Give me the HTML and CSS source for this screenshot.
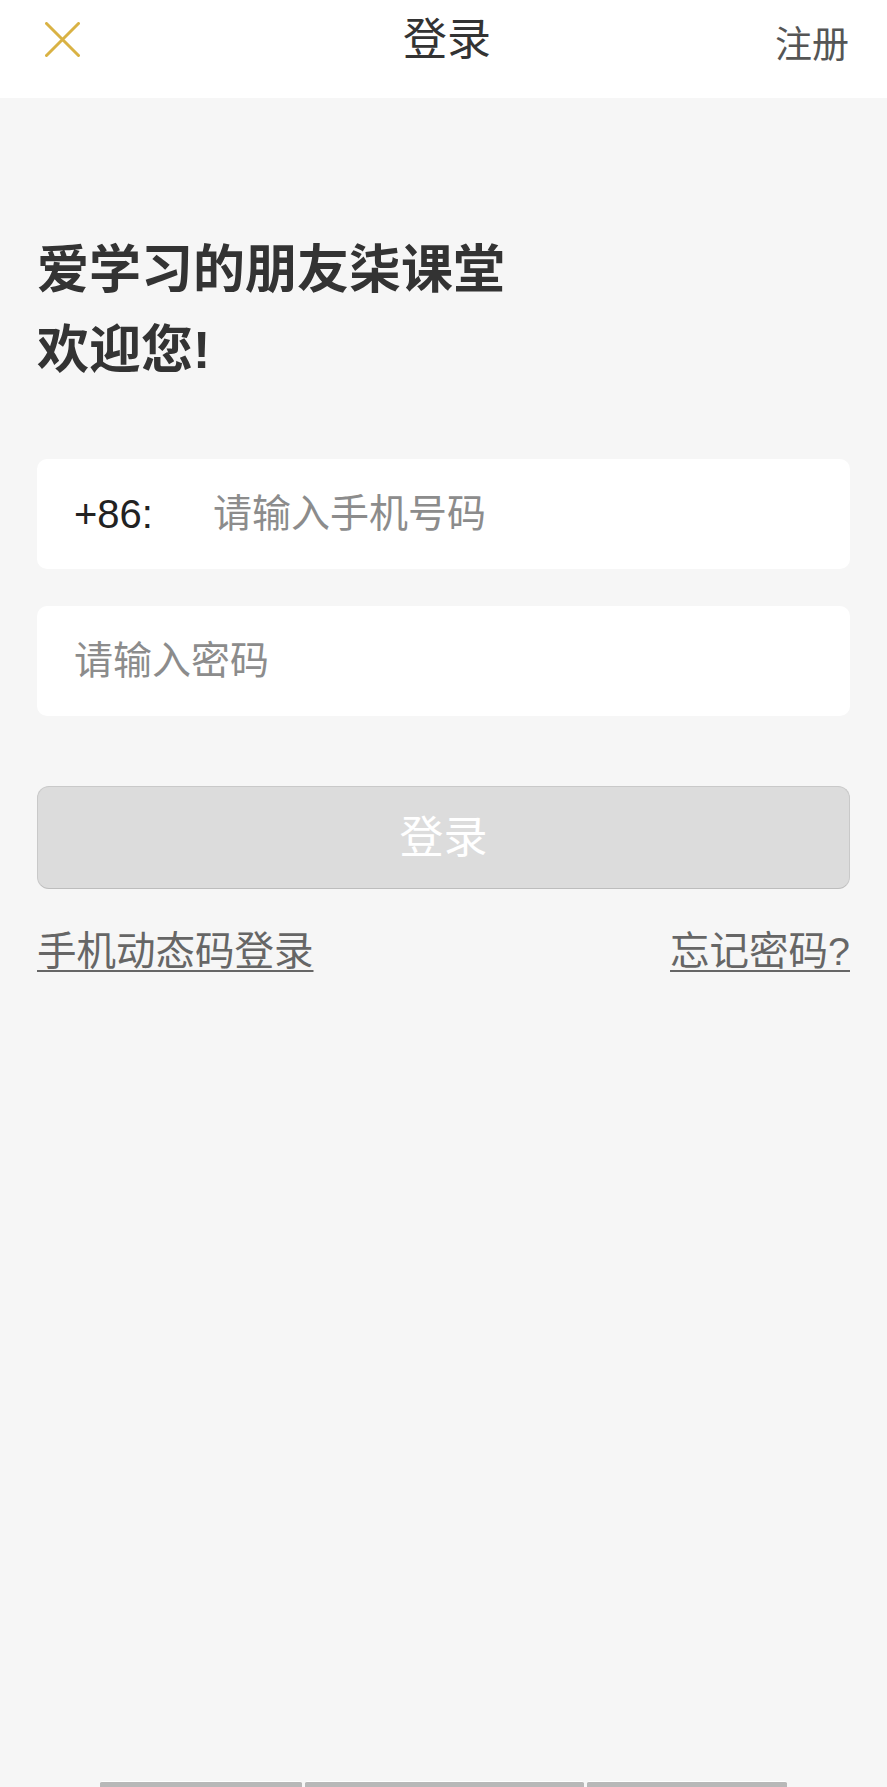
FILE: index.html
```html
<!DOCTYPE html>
<html lang="zh-CN">
<head>
<meta charset="utf-8">
<title>登录</title>
<link rel="stylesheet" href="styles.css">
</head>
<body>
<div class="page">
  <header class="topbar">
    <div class="topbar-left">
      <svg class="close-icon" width="35" height="35" viewBox="0 0 35 35" aria-label="关闭">
        <path d="M1.5 1.5 L33.5 33.5 M33.5 1.5 L1.5 33.5" stroke="#d9b244" stroke-width="3" stroke-linecap="round" fill="none"/>
      </svg>
    </div>
    <div class="topbar-title">登录</div>
    <div class="topbar-right">注册</div>
  </header>

  <main class="content">
    <h1 class="welcome">爱学习的朋友柒课堂<br>欢迎您!</h1>

    <form class="login-form">
      <label class="field">
        <span class="field-prefix">+86:</span>
        <input class="field-input" type="tel" placeholder="请输入手机号码">
      </label>
      <label class="field">
        <input class="field-input" type="password" placeholder="请输入密码">
      </label>
      <button class="submit" type="button">登录</button>
    </form>

    <div class="links">
      <a class="link" href="#">手机动态码登录</a>
      <a class="link" href="#">忘记密码?</a>
    </div>
  </main>

  <div class="bottom-bars">
    <span class="bar bar-1"></span>
    <span class="bar bar-2"></span>
    <span class="bar bar-3"></span>
  </div>
</div>
</body>
</html>
```

FILE: styles.css
```css
* {
  box-sizing: border-box;
}

html, body {
  margin: 0;
  padding: 0;
  background: #f6f6f6;
}

body {
  font-family: "Liberation Sans", "Noto Sans CJK SC", sans-serif;
  color: #333;
}

.page {
  min-height: 100vh;
  display: flex;
  flex-direction: column;
}

.topbar {
  height: 98px;
  background: #fff;
  display: grid;
  grid-template-columns: 1fr auto 1fr;
  align-items: start;
  padding: 0 38px 0 45px;
}

.topbar-left {
  padding-top: 22px;
  display: flex;
}

.close-icon {
  display: block;
}

.topbar-title {
  font-size: 44px;
  line-height: 44px;
  padding-top: 18px;
  color: #333;
  font-weight: 400;
}

.topbar-right {
  justify-self: end;
  font-size: 37px;
  line-height: 37px;
  padding-top: 27px;
  color: #555;
}

.content {
  padding: 0 37px;
}

.welcome {
  margin: 132px 0 0;
  font-size: 52px;
  line-height: 80px;
  font-weight: 700;
  color: #333;
  letter-spacing: 0;
}

.login-form {
  margin-top: 69px;
  display: flex;
  flex-direction: column;
}

.field {
  height: 110px;
  background: #fff;
  border-radius: 10px;
  display: flex;
  align-items: center;
  padding: 0 37px;
}

.field + .field {
  margin-top: 37px;
}

.field-prefix {
  width: 139px;
  flex: none;
  font-size: 40px;
  color: #222;
}

.field-input {
  flex: 1;
  min-width: 0;
  border: none;
  outline: none;
  background: transparent;
  font-family: "Liberation Sans", "Noto Sans CJK SC", sans-serif;
  font-size: 39px;
  color: #333;
  padding: 0;
}

.field-input::placeholder {
  color: #8c8c8c;
}

.submit {
  margin-top: 70px;
  height: 103px;
  border: 1px solid #c9c9c9;
  border-bottom-color: #bdbdbd;
  border-radius: 12px;
  background: #dcdcdc;
  color: #fff;
  font-family: "Liberation Sans", "Noto Sans CJK SC", sans-serif;
  font-size: 44px;
  padding: 0 0 8px;
}

.links {
  margin-top: 40px;
  display: flex;
  justify-content: space-between;
  align-items: center;
}

.link {
  font-size: 39.5px;
  line-height: 44px;
  color: #666;
  text-decoration: underline;
  text-decoration-thickness: 2px;
  text-underline-offset: 5px;
}

.bottom-bars {
  margin-top: auto;
  height: 6px;
  display: flex;
  gap: 3px;
  padding-left: 100px;
  align-items: flex-end;
}

.bar {
  height: 5px;
  background: #b8b8b8;
  border-top: 1px solid #fff;
  border-radius: 2px 2px 0 0;
  box-sizing: content-box;
}

.bar-1 { width: 202px; }
.bar-2 { width: 279px; }
.bar-3 { width: 200px; }
```
